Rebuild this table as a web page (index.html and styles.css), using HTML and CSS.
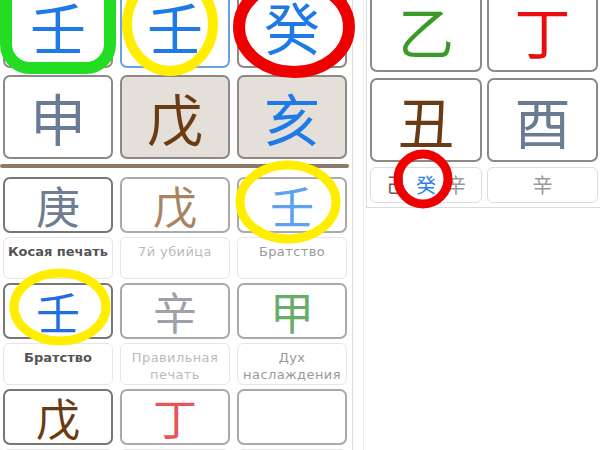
FILE: index.html
```html
<!DOCTYPE html>
<html lang="ru">
<head>
    <meta charset="UTF-8">
    <meta name="viewport" content="width=device-width, initial-scale=1.0">
    <title>Карта Ба Цзы</title>
    <link rel="stylesheet" href="styles.css">
</head>
<body>
    <div class="page">
        <div class="left-panel">
            <div class="pillars">
                <div class="cell cell-water">壬</div>
                <div class="cell cell-selected cell-water">壬</div>
                <div class="cell cell-water">癸</div>
                <div class="cell cell-metal">申</div>
                <div class="cell cell-shaded cell-earth">戊</div>
                <div class="cell cell-shaded cell-water">亥</div>
            </div>

            <div class="divider"></div>

            <div class="hidden-stems">
                <div class="stem stem-main metal">庚</div>
                <div class="stem stem-faint earth-light">戊</div>
                <div class="stem stem-faint water-light">壬</div>
                <div class="label label-main">Косая печать</div>
                <div class="label label-pale">7й убийца</div>
                <div class="label label-mid">Братство</div>

                <div class="stem stem-main water">壬</div>
                <div class="stem stem-faint grey">辛</div>
                <div class="stem stem-faint wood-light">甲</div>
                <div class="label label-main">Братство</div>
                <div class="label label-pale">Правильная<br>печать</div>
                <div class="label label-mid">Дух<br>наслаждения</div>

                <div class="stem stem-main earth">戊</div>
                <div class="stem stem-faint fire-light">丁</div>
                <div class="stem stem-faint"></div>
                <div class="label"></div>
                <div class="label"></div>
                <div class="label"></div>
            </div>
        </div>

        <div class="right-column">
            <div class="right-panel">
                <div class="cell cell-wood">乙</div>
                <div class="cell cell-fire">丁</div>
                <div class="cell cell-earth">丑</div>
                <div class="cell cell-metal">酉</div>
                <div class="mini">
                    <span class="mini-earth">己</span>
                    <span class="mini-water">癸</span>
                    <span class="mini-grey">辛</span>
                </div>
                <div class="mini">
                    <span class="mini-grey">辛</span>
                </div>
            </div>
        </div>
    </div>

    <!-- пометки поверх скриншота -->
    <svg class="marks" width="600" height="450" viewBox="0 0 600 450">
        <rect x="6" y="-40" width="104" height="108" rx="24" fill="none" stroke="#22dd22" stroke-width="12"/>
        <ellipse cx="170" cy="24" rx="43" ry="47" fill="none" stroke="#ffee00" stroke-width="10"/>
        <ellipse cx="294" cy="27" rx="55" ry="45" fill="none" stroke="#ee0000" stroke-width="12"/>
        <ellipse cx="288" cy="202" rx="48" ry="37" fill="none" stroke="#ffee00" stroke-width="9"/>
        <ellipse cx="60" cy="307" rx="46" ry="34" fill="none" stroke="#ffee00" stroke-width="9"/>
        <circle cx="423" cy="179" r="25" fill="none" stroke="#ee0000" stroke-width="9"/>
    </svg>
</body>
</html>
```

FILE: styles.css
```css
body {
    margin: 0;
    background-color: #fff;
    font-family: "Noto Sans CJK SC", "DejaVu Sans", sans-serif;
    overflow: hidden;
    width: 600px;
    height: 450px;
    position: relative;
}

.page {
    display: flex;
    margin-top: -16px;
}

/* левая часть: столпы и скрытые стволы */

.left-panel {
    box-sizing: border-box;
    width: 353px;
    padding: 0 5px 0 3px;
    border-right: 1px solid #dcdcdc;
}

.pillars {
    display: grid;
    grid-template-columns: 110px 110px 110px;
    grid-template-rows: 84px 84px;
    gap: 7px;
}

.cell {
    box-sizing: border-box;
    display: flex;
    align-items: center;
    justify-content: center;
    border: 2px solid #8e8984;
    border-radius: 7px;
    background-color: #fff;
    font-size: 56px;
    line-height: 0.85;
}

.cell-selected {
    border-color: #6aa3e0;
}

.cell-shaded {
    background-color: #e4dfd9;
}

.cell-water { color: #1f7ae8; }
.cell-metal { color: #6a7c94; }
.cell-earth { color: #6b3c14; }
.cell-wood { color: #3d9a2a; }
.cell-fire { color: #e8100f; }

.divider {
    height: 4px;
    width: 349px;
    margin: 5px 0 9px -3px;
    border-radius: 2px;
    background-color: #8c7b6a;
}

.hidden-stems {
    display: grid;
    grid-template-columns: 110px 110px 110px;
    grid-template-rows: 56px 42px 56px 42px 56px 42px;
    column-gap: 7px;
    row-gap: 4px;
}

.stem {
    box-sizing: border-box;
    display: flex;
    align-items: center;
    justify-content: center;
    border: 2px solid #aaa;
    border-radius: 7px;
    font-size: 44px;
    line-height: 1;
}

.stem-main {
    border-color: #777;
}

.metal { color: #6e7d92; }
.water { color: #1f6fe0; }
.earth { color: #6b3a12; }
.earth-light { color: #a88463; }
.water-light { color: #5da2ee; }
.wood-light { color: #6aac6a; }
.fire-light { color: #e65858; }
.grey { color: #a0a0a8; }

.label {
    box-sizing: border-box;
    border: 1px solid #e6e6e6;
    border-radius: 6px;
    padding-top: 5px;
    text-align: center;
    font-family: "DejaVu Sans", sans-serif;
    font-size: 13px;
    line-height: 17px;
    letter-spacing: 0.4px;
}

.label-main {
    color: #555;
    font-weight: bold;
    letter-spacing: 0;
}

.label-pale {
    color: #bbb;
}

.label-mid {
    color: #999;
}

/* правая часть */

.right-column {
    flex: 1;
    height: 470px;
    padding-left: 2px;
    border-left: 1px solid #ececec;
    margin-left: 10px;
}

.right-panel {
    box-sizing: border-box;
    display: grid;
    grid-template-columns: 112px 111px;
    grid-template-rows: 84px 84px 35px;
    column-gap: 5px;
    row-gap: 6px;
    padding: 4px 2px 4px 3px;
    border-left: 1px solid #dcdcdc;
    border-bottom: 1px solid #dcdcdc;
}

.right-panel .mini {
    margin-top: -1px;
}

.mini {
    box-sizing: border-box;
    display: flex;
    align-items: center;
    justify-content: center;
    gap: 10px;
    border: 1px solid #dedede;
    border-radius: 6px;
    font-size: 20px;
    line-height: 1;
}

.mini-earth { color: #6b5a4a; }
.mini-water { color: #2a80e8; }
.mini-grey { color: #999; }

.marks {
    position: absolute;
    top: 0;
    left: 0;
    pointer-events: none;
}
```
